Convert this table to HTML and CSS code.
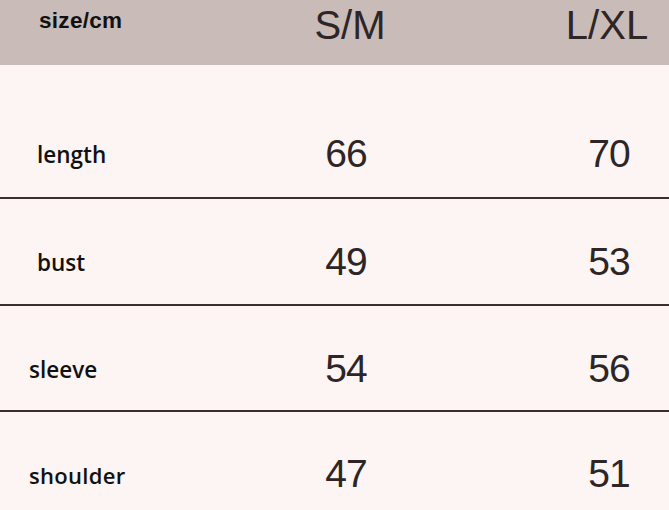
FILE: index.html
```html
<!DOCTYPE html>
<html>
<head>
<meta charset="utf-8">
<link rel="stylesheet" href="styles.css">
</head>
<body>
<div class="table">
  <div class="row head">
    <div class="label label-head">size/cm</div>
    <div class="num num-head c2">S/M</div>
    <div class="num num-head c3">L/XL</div>
  </div>
  <div class="row r1">
    <div class="label">length</div>
    <div class="num c2">66</div>
    <div class="num c3">70</div>
  </div>
  <div class="row r2">
    <div class="label">bust</div>
    <div class="num c2">49</div>
    <div class="num c3">53</div>
  </div>
  <div class="row r3">
    <div class="label label-in">sleeve</div>
    <div class="num c2">54</div>
    <div class="num c3">56</div>
  </div>
  <div class="row r4">
    <div class="label label-in label-rb">shoulder</div>
    <div class="num c2">47</div>
    <div class="num c3">51</div>
  </div>
</div>
</body>
</html>
```

FILE: styles.css
```css
html, body {
  margin: 0;
  padding: 0;
}
body {
  width: 669px;
  height: 510px;
  overflow: hidden;
  background: #fdf5f3;
}
.table {
  display: flex;
  flex-direction: column;
}
.row {
  display: flex;
  align-items: flex-end;
  box-sizing: border-box;
}
.head {
  height: 65px;
  background: #c9bbb8;
  padding-bottom: 20px;
}
.r1 {
  height: 134px;
  padding-bottom: 30px;
  border-bottom: 2.5px solid #3a2e30;
}
.r2 {
  height: 107px;
  padding-bottom: 29px;
  border-bottom: 2.5px solid #3a2e30;
}
.r3 {
  height: 106px;
  padding-bottom: 28px;
  border-bottom: 2.5px solid #3a2e30;
}
.r4 {
  height: 98px;
  padding-bottom: 23px;
}
.label {
  width: 286px;
  box-sizing: border-box;
  padding-left: 37px;
  font-family: "Open Sans", sans-serif;
  font-weight: 600;
  font-size: 22.5px;
  line-height: 24px;
  color: #111;
}
.label-in {
  padding-left: 29px;
}
.label-rb {
  font-size: 22px;
  letter-spacing: 0.3px;
}
.label-head {
  padding-left: 39px;
  font-family: "Liberation Sans", Arial, sans-serif;
  font-weight: bold;
  font-size: 22.5px;
  letter-spacing: 0.3px;
  line-height: 24px;
  margin-bottom: 12px;
}
.num {
  width: 120px;
  text-align: center;
  font-family: "Liberation Sans", Arial, sans-serif;
  font-size: 39px;
  letter-spacing: -1px;
  line-height: 40px;
  color: #2e2527;
  margin-bottom: -7px;
}
.c3 {
  margin-left: 143px;
}
.num-head {
  font-size: 40px;
  letter-spacing: 0;
  line-height: 40px;
  color: #2e2527;
  margin-bottom: 0;
}
.head .c2 {
  transform: translateX(4px);
}
.head .c3 {
  transform: translateX(-2px);
}
```
